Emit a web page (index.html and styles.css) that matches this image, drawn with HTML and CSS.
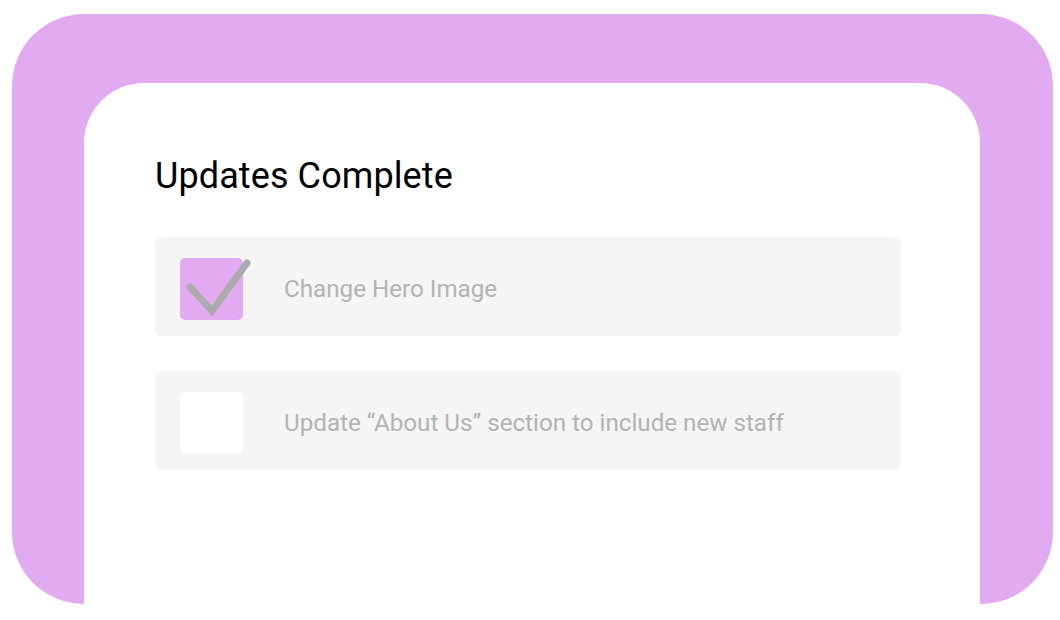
FILE: index.html
```html
<!DOCTYPE html>
<html>
<head>
<meta charset="utf-8">
<link rel="stylesheet" href="styles.css">
</head>
<body>
<div class="frame">
  <div class="card">
    <h1 class="title">Updates Complete</h1>
    <div class="list">
      <div class="row">
        <div class="box box-checked">
          <svg class="check" width="63" height="63" viewBox="0 0 63 63"><path d="M10 29 L32 53 L67 5" fill="none" stroke="#ababab" stroke-width="7" stroke-linecap="round" stroke-linejoin="miter"/></svg>
        </div>
        <span class="label">Change Hero Image</span>
      </div>
      <div class="row">
        <div class="box"></div>
        <span class="label">Update “About Us” section to include new staff</span>
      </div>
    </div>
  </div>
</div>
</body>
</html>
```

FILE: styles.css
```css
html, body {
  margin: 0;
  padding: 0;
  background: #ffffff;
}
body {
  font-family: Roboto, "Liberation Sans", sans-serif;
  width: 1060px;
  height: 620px;
  overflow: hidden;
}
.frame {
  margin: 14px 0 0 12px;
  width: 1041px;
  height: 590px;
  background: #e2aaf0;
  border-radius: 72px;
  padding: 69px 0 0 72px;
  box-sizing: border-box;
}
.card {
  width: 896px;
  height: 521px;
  background: #ffffff;
  border-radius: 60px 60px 0 0;
  box-sizing: border-box;
  padding: 73px 79px 0 71px;
  display: flex;
  flex-direction: column;
}
.title {
  margin: 0;
  font-weight: 400;
  font-size: 36px;
  line-height: 40px;
  letter-spacing: 0.1px;
  color: #000;
}
.list {
  margin-top: 41px;
  display: flex;
  flex-direction: column;
  gap: 35px;
}
.row {
  height: 99px;
  background: #f5f5f5;
  border-radius: 6px;
  display: flex;
  align-items: center;
  padding: 20px 0 16px 25px;
  box-sizing: border-box;
}
.box {
  width: 63px;
  height: 62px;
  border-radius: 5px;
  background: #ffffff;
  position: relative;
  flex: none;
}
.box-checked {
  background: #e2aaf0;
}
.check {
  position: absolute;
  left: 0;
  top: 0;
  overflow: visible;
}
.label {
  margin-left: 41px;
  font-size: 24.2px;
  color: #b3b3b3;
}
```
